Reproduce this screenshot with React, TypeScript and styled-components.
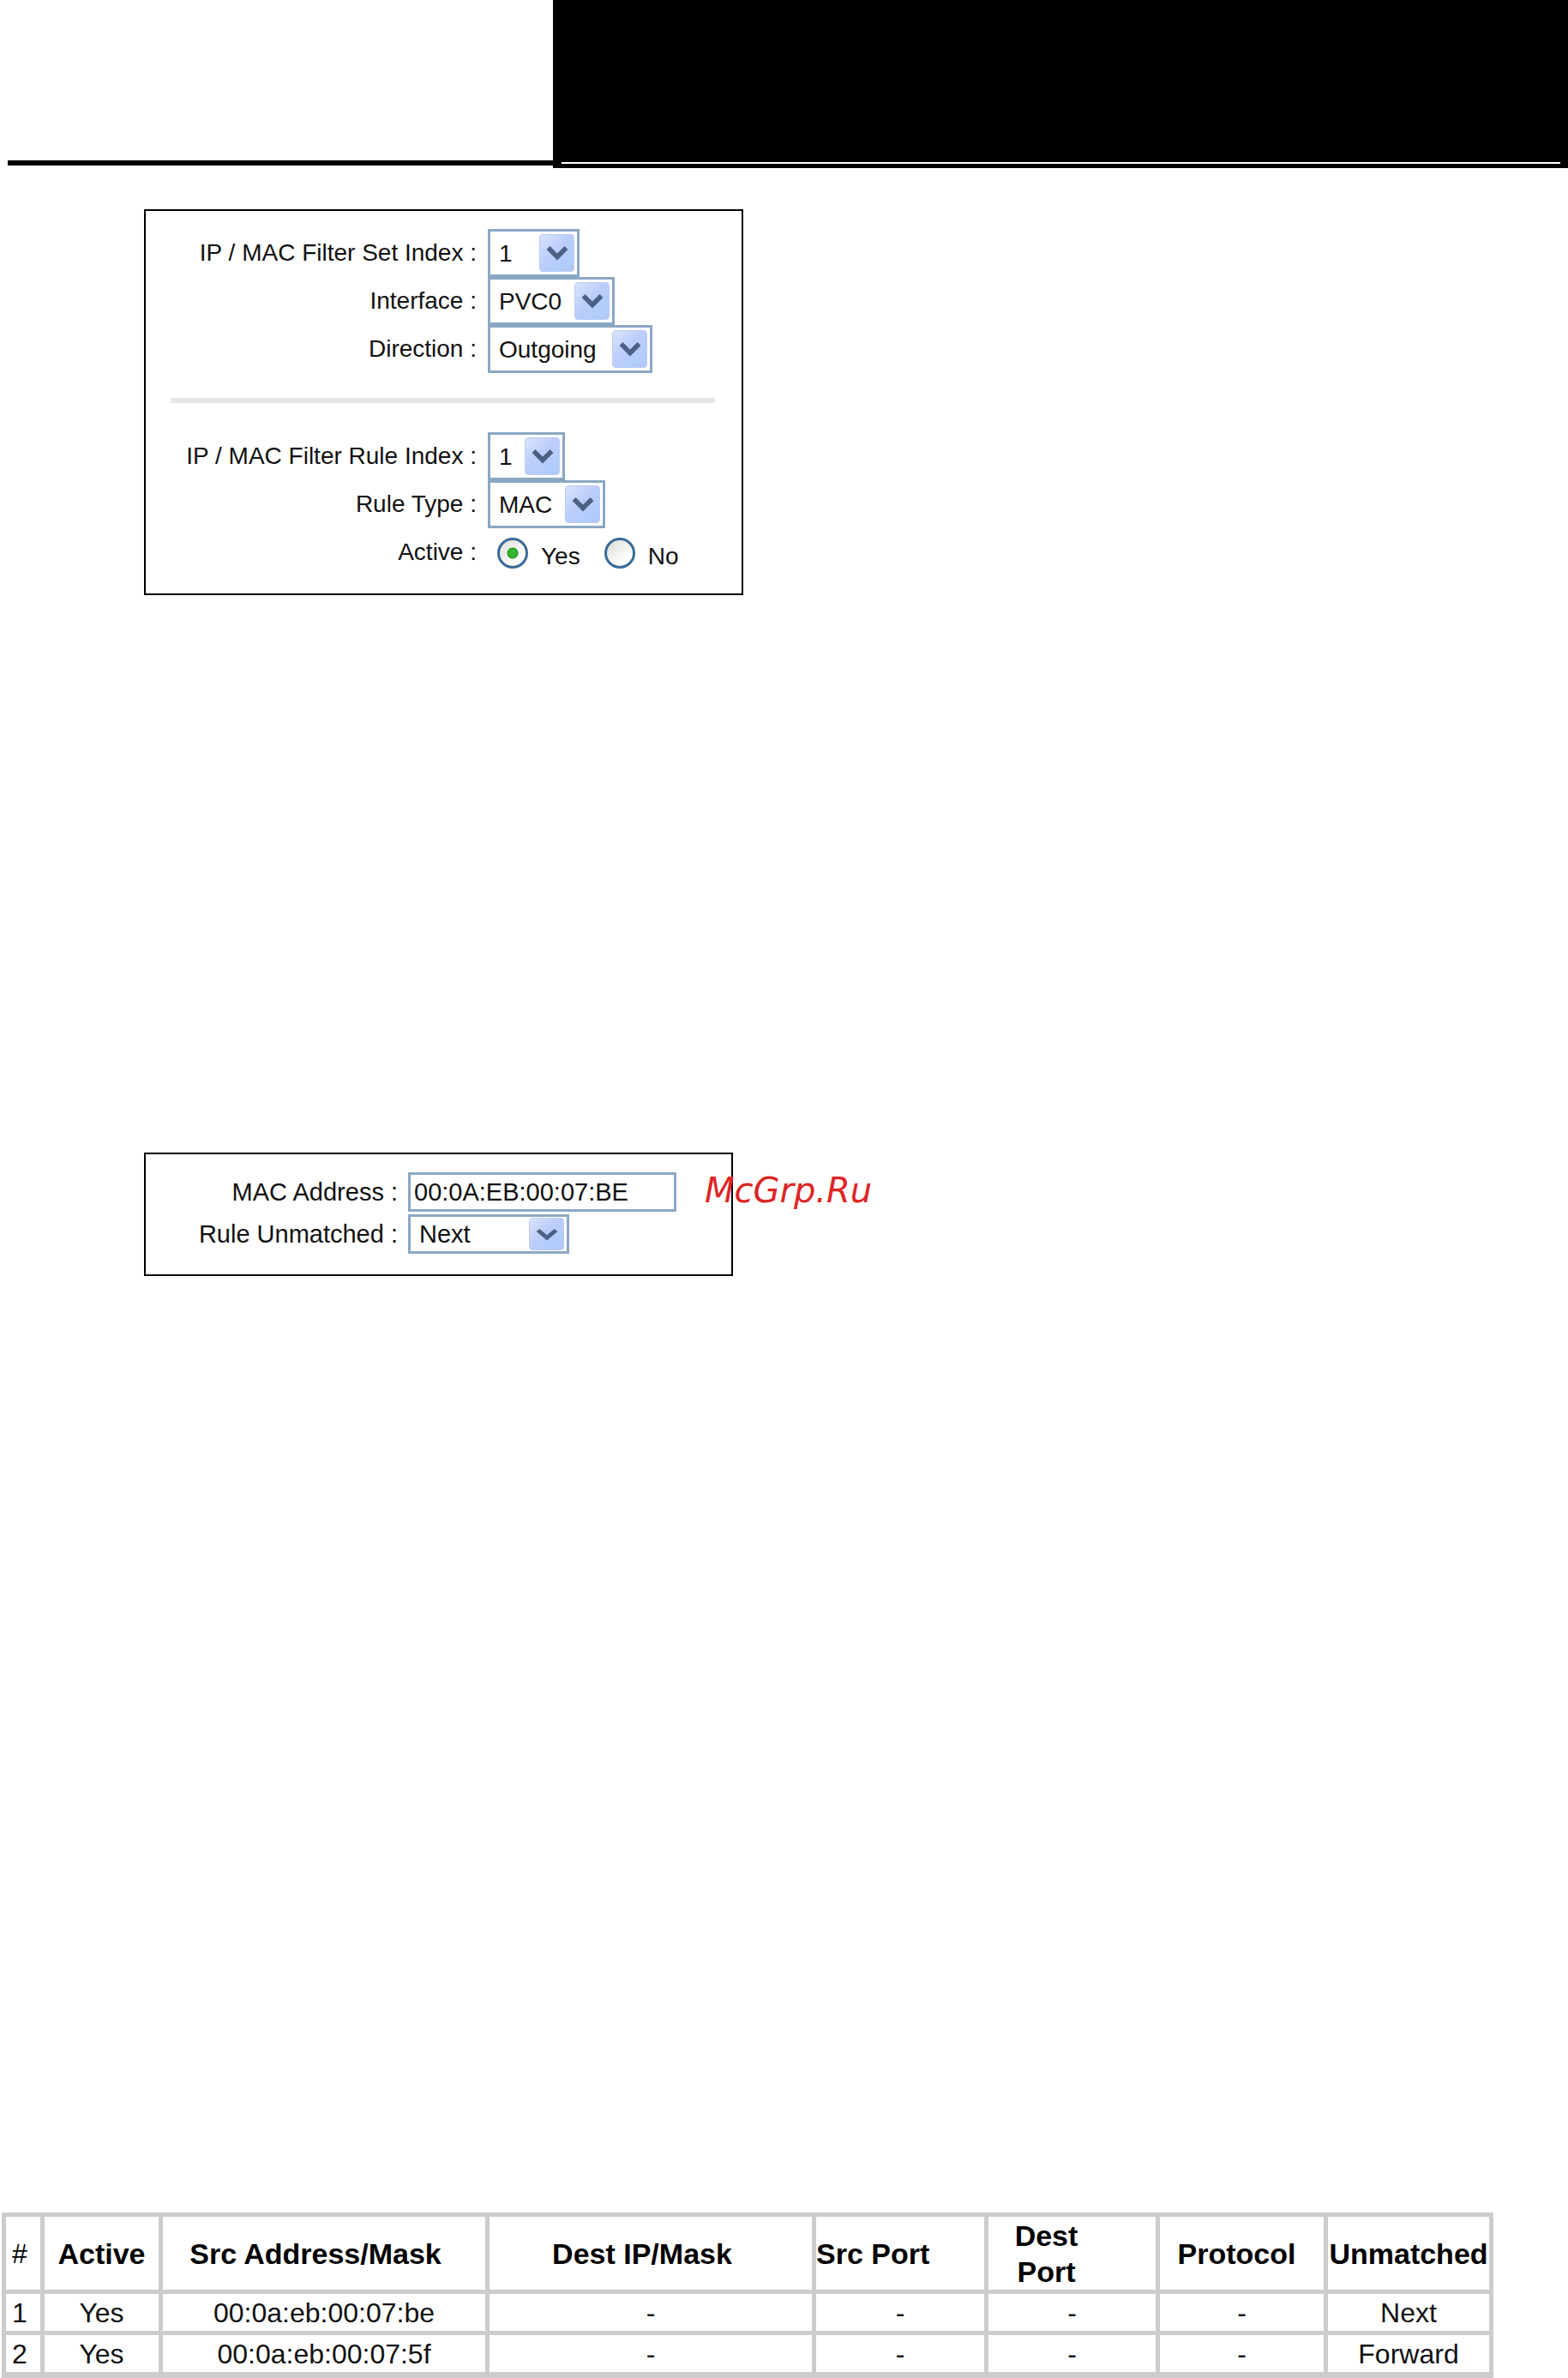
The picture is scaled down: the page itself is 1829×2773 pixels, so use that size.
import React from 'react'
import styled, { createGlobalStyle } from 'styled-components'

const columns = [
  { title: '#', width: 40 },
  { title: 'Active', width: 133 },
  { title: 'Src Address/Mask', width: 376 },
  { title: 'Dest IP/Mask', width: 376 },
  { title: 'Src Port', width: 196 },
  { title: 'Dest Port', width: 195 },
  { title: 'Protocol', width: 191 },
  { title: 'Unmatched', width: 188 },
]

const rules = [
  ['1', 'Yes', '00:0a:eb:00:07:be', '-', '-', '-', '-', 'Next'],
  ['2', 'Yes', '00:0a:eb:00:07:5f', '-', '-', '-', '-', 'Forward'],
]

type DropProps = {
  id: string
  value: string
  options: string[]
  width: number
  small?: boolean
}

const Drop = ({ id, value, options, width, small }: DropProps) => {
  return (
    <DropHold $width={width} $small={small}>
      <select id={id} defaultValue={value}>
        {options.map((o) => (
          <option key={o}>{o}</option>
        ))}
      </select>
      <Arrow $small={small}>
        <svg width="26" height={small ? 15 : 18} viewBox="0 0 26 18" preserveAspectRatio="none">
          <path d="M2.5 3 L13 13.5 L23.5 3" fill="none" stroke="#4d6185" strokeWidth="5.5" />
        </svg>
      </Arrow>
    </DropHold>
  )
}

const App = () => {
  return (
    <Page>
      <GlobalStyle />
      <Header>
        <HeadLeft>
          <DarkLine />
        </HeadLeft>
        <HeadRight>
          <LightLine />
        </HeadRight>
      </Header>

      <Content>
        <FilterPanel>
          <Row>
            <label htmlFor="set">IP / MAC Filter Set Index :</label>
            <Drop id="set" value="1" options={['1', '2', '3']} width={107} />
          </Row>
          <Row>
            <label htmlFor="interface">Interface :</label>
            <Drop id="interface" value="PVC0" options={['PVC0', 'PVC1']} width={148} />
          </Row>
          <Row>
            <label htmlFor="direction">Direction :</label>
            <Drop id="direction" value="Outgoing" options={['Outgoing', 'Incoming']} width={192} />
          </Row>
          <Divider />
          <Row>
            <label htmlFor="rule">IP / MAC Filter Rule Index :</label>
            <Drop id="rule" value="1" options={['1', '2', '3']} width={90} />
          </Row>
          <Row>
            <label htmlFor="type">Rule Type :</label>
            <Drop id="type" value="MAC" options={['MAC', 'IP']} width={137} />
          </Row>
          <Row role="radiogroup" aria-labelledby="active">
            <Caption id="active">Active :</Caption>
            <Choices>
              <Choice>
                <Radio name="active" defaultChecked />
                <span>Yes</span>
              </Choice>
              <Choice>
                <Radio name="active" />
                <span>No</span>
              </Choice>
            </Choices>
          </Row>
        </FilterPanel>

        <MacPanel>
          <MacRow>
            <label htmlFor="mac">MAC Address :</label>
            <TextInput id="mac" defaultValue="00:0A:EB:00:07:BE" />
          </MacRow>
          <MacRow>
            <label htmlFor="unmatched">Rule Unmatched :</label>
            <Drop id="unmatched" value="Next" options={['Next', 'Forward']} width={188} small />
          </MacRow>
          <Mark>McGrp.Ru</Mark>
        </MacPanel>
      </Content>

      <TableHold>
        <RuleTable>
          <colgroup>
            {columns.map((c) => (
              <Col key={c.title} $width={c.width} />
            ))}
          </colgroup>
          <thead>
            <tr>
              {columns.map((c) => (
                <th key={c.title} scope="col">{c.title}</th>
              ))}
            </tr>
          </thead>
          <tbody>
            {rules.map((rule) => (
              <tr key={rule[0]}>
                {rule.map((cell, i) => (
                  <td key={i}>{cell}</td>
                ))}
              </tr>
            ))}
          </tbody>
        </RuleTable>
      </TableHold>
    </Page>
  )
}

export default App

const GlobalStyle = createGlobalStyle`
  *{
    box-sizing: border-box;
  }
  body{
    margin: 0;
    background-color: #fff;
  }
`
const Page = styled.div`
  width: 100%;
  color: #111;
  font-family: "Liberation Sans", Arial, sans-serif;
  font-size: 28px;
`
const Header = styled.header`
  display: grid;
  grid-template-columns: 645fr 1184fr;
  min-height: 196px;
`
const HeadLeft = styled.div`
  display: flex;
  flex-direction: column;
  justify-content: flex-end;
  padding: 0 0 3px 9px;
`
const HeadRight = styled.div`
  display: flex;
  flex-direction: column;
  justify-content: flex-end;
  padding: 0 9px 5px 10px;
  background-color: #000;
`
const DarkLine = styled.div`
  height: 6px;
  background-color: #000;
`
const LightLine = styled.div`
  height: 2px;
  background-color: #fff;
`
const Content = styled.main`
  padding: 48px 24px 0 168px;
`
const Panel = styled.section`
  position: relative;
  width: 100%;
  border: 2px solid #000;
`
const FilterPanel = styled(Panel)`
  max-width: 699px;
  padding: 21px 0 20px;
`
const MacPanel = styled(Panel)`
  max-width: 687px;
  margin-top: 650px;
  padding: 21px 0 24px;
  font-size: 29px;
  display: flex;
  flex-direction: column;
  gap: 3px;
`
const Row = styled.div`
  display: grid;
  grid-template-columns: 386px 1fr;
  column-gap: 13px;
  align-items: center;
  min-height: 56px;
  label:first-child{
    text-align: right;
  }
`
const MacRow = styled(Row)`
  grid-template-columns: 294px 1fr;
  column-gap: 12px;
  min-height: 46px;
`
const Caption = styled.span`
  text-align: right;
`
const Divider = styled.hr`
  height: 6px;
  margin: 29px 31px 34px 29px;
  border: none;
  background-color: #e7e7e7;
`
const DropHold = styled.div<{ $width: number; $small?: boolean }>`
  position: relative;
  width: ${(p) => p.$width}px;
  height: ${(p) => (p.$small ? 46 : 56)}px;
  select{
    width: 100%;
    height: 100%;
    padding: 0 0 0 10px;
    appearance: none;
    border: 3px solid #8ba8c3;
    border-radius: 0;
    outline: none;
    background-color: #fff;
    color: #111;
    font: inherit;
  }
`
const Arrow = styled.span<{ $small?: boolean }>`
  position: absolute;
  top: ${(p) => (p.$small ? 4 : 6)}px;
  right: 6px;
  bottom: ${(p) => (p.$small ? 4 : 6)}px;
  width: 41px;
  display: flex;
  align-items: center;
  justify-content: center;
  border: 1px solid #bccbf5;
  border-radius: 4px;
  background: linear-gradient(135deg, #dbe4fe 0%, #bccdfb 45%, #b0cdfc 80%, #b4c5f5 100%);
  pointer-events: none;
`
const Choices = styled.div`
  display: flex;
  align-items: center;
  gap: 28px;
  padding-left: 11px;
`
const Choice = styled.label`
  display: flex;
  align-items: center;
  gap: 15px;
  span{
    padding-top: 10px;
  }
`
const Radio = styled.input.attrs({ type: 'radio' })`
  appearance: none;
  width: 36px;
  height: 36px;
  margin: 2px 0 0;
  border: 3px solid #3a6a97;
  border-radius: 50%;
  background: linear-gradient(135deg, #dcdcd6, #fff 75%);
  &:checked{
    background: radial-gradient(circle, #35b531 0 4px, #21a121 6px, transparent 7px),
      linear-gradient(135deg, #dcdcd6, #fff 75%);
  }
`
const TextInput = styled.input.attrs({ type: 'text' })`
  width: 313px;
  height: 46px;
  padding: 0 4px;
  border: 3px solid #8ba8c3;
  border-radius: 0;
  outline: none;
  background-color: #fff;
  color: #111;
  font: inherit;
`
const Mark = styled.span`
  position: absolute;
  top: 18px;
  left: 652px;
  color: #dc2626;
  font-family: "DejaVu Sans", Verdana, sans-serif;
  font-size: 40px;
  font-style: italic;
  line-height: 48px;
  white-space: nowrap;
`
const TableHold = styled.div`
  margin-top: 1092px;
  padding: 0 87px 0 2px;
`
const RuleTable = styled.table`
  width: 100%;
  table-layout: fixed;
  border-collapse: separate;
  border-spacing: 5px;
  border-bottom: 2px solid #ccc;
  background-color: #ccc;
  text-align: center;
  th, td{
    padding: 0;
    background-color: #fff;
  }
  th{
    height: 85px;
    color: #000;
    font-size: 34px;
    line-height: 42px;
  }
  td{
    height: 43px;
    font-size: 32px;
    line-height: 40px;
  }
  th:first-child, td:first-child{
    padding-left: 7px;
    text-align: left;
    font-size: 32px;
    font-weight: normal;
  }
  th:nth-child(3), th:nth-child(4){
    padding-right: 20px;
  }
  th:nth-child(5){
    text-align: left;
  }
  th:nth-child(6){
    padding: 0 80px 0 20px;
  }
  th:nth-child(7){
    padding-right: 12px;
  }
`
const Col = styled.col<{ $width: number }>`
  width: ${(p) => (p.$width / 1695) * 100}%;
`
